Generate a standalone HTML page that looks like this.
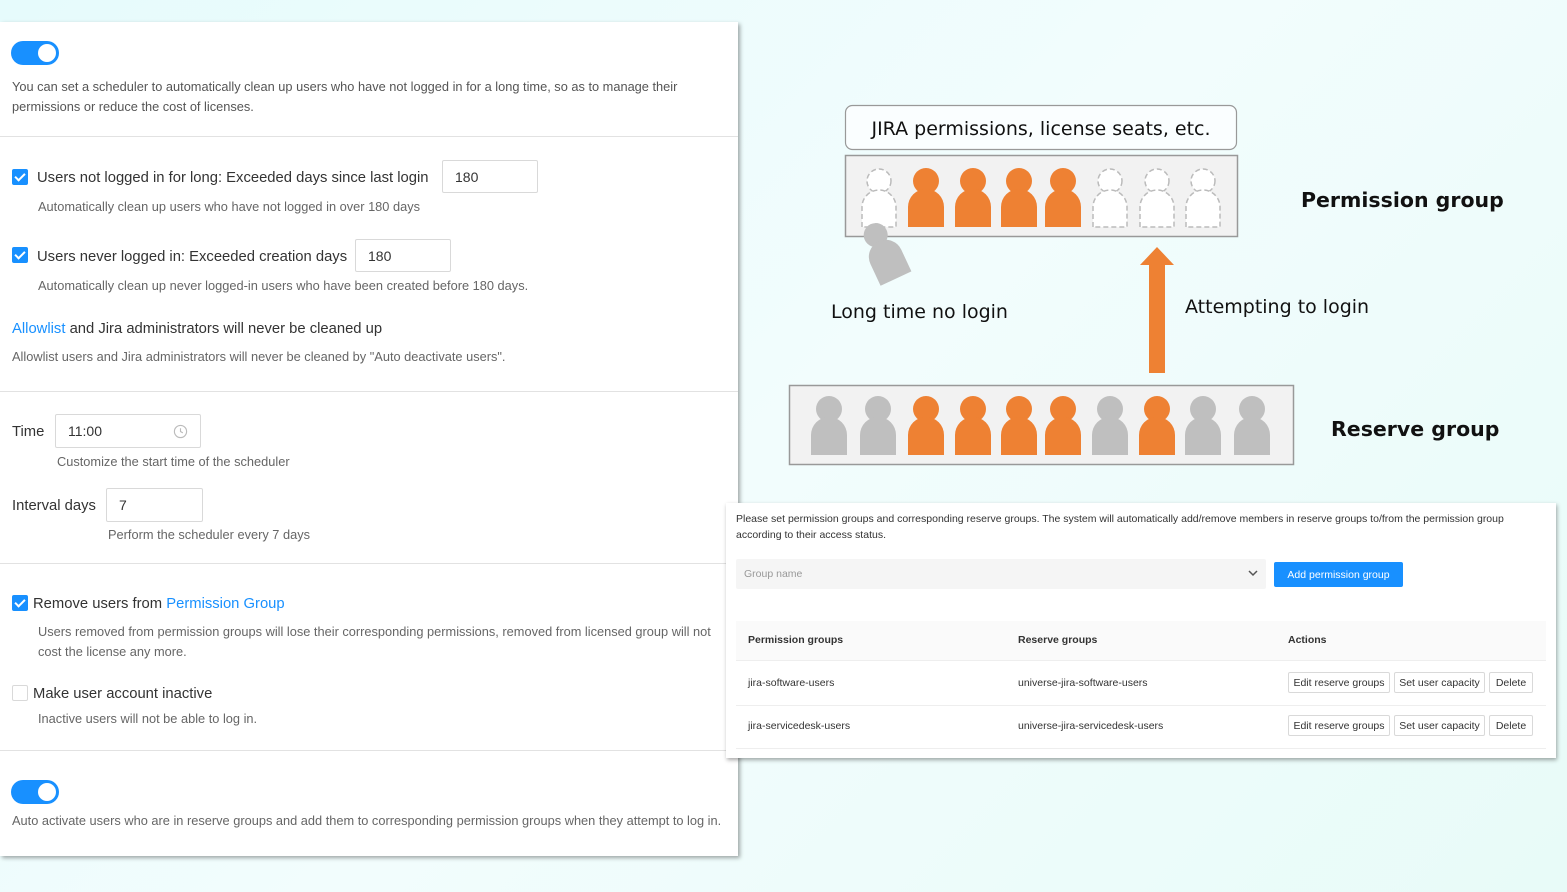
<!DOCTYPE html>
<html><head><meta charset="utf-8"><style>
*{margin:0;padding:0;box-sizing:border-box}
body{width:1567px;height:892px;overflow:hidden;background:linear-gradient(135deg,#e6fbfc 0%,#f2fdfd 50%,#e8fbf8 100%);font-family:"Liberation Sans",sans-serif;position:relative;color:#333}
.a{position:absolute;white-space:nowrap}
.panel{position:absolute;left:0;top:22px;width:738px;height:834px;background:#fff;box-shadow:2px 2px 4px rgba(0,0,0,.35)}
.hr{position:absolute;left:0;width:738px;height:1px;background:#e2e2e2}
.tog{position:absolute;width:48px;height:24px;border-radius:12px;background:#1890ff}
.tog:after{content:"";position:absolute;right:3px;top:3px;width:18px;height:18px;border-radius:50%;background:#fff}
.cb{position:absolute;width:16px;height:16px;border-radius:2px;background:#1890ff}
.cb:after{content:"";position:absolute;left:5px;top:2px;width:4px;height:8px;border:solid #fff;border-width:0 2px 2px 0;transform:rotate(45deg)}
.cbe{position:absolute;width:16px;height:16px;border-radius:2px;border:1px solid #d9d9d9;background:#fff}
.lbl{font-size:14.8px;color:#333}
.desc{font-size:12.8px;color:#666}
.inp{position:absolute;border:1px solid #d9d9d9;border-radius:2px;background:#fff;font-size:14px;color:#333;padding-left:12px;display:flex;align-items:center}
.blue{color:#1890ff}
.rp{position:absolute;left:726px;top:503px;width:830px;height:255px;background:#fff;box-shadow:1px 2px 4px rgba(0,0,0,.35)}
.sm{font-size:10.5px;color:#333}
.btn{position:absolute;border:1px solid #d9d9d9;border-radius:2px;font-size:10.5px;color:#333;display:flex;align-items:center;justify-content:center;background:#fff}
</style></head><body>
<div class="panel">
 <div class="tog" style="left:11px;top:19px"></div>
 <div class="a desc" style="left:12px;top:57px;color:#555">You can set a scheduler to automatically clean up users who have not logged in for a long time, so as to manage their</div>
 <div class="a desc" style="left:12px;top:77px;color:#555">permissions or reduce the cost of licenses.</div>
 <div class="hr" style="top:114px"></div>

 <div class="cb" style="left:12px;top:147px"></div>
 <div class="a lbl" style="left:37px;top:148px">Users not logged in for long: Exceeded days since last login</div>
 <div class="inp" style="left:442px;top:138px;width:96px;height:33px">180</div>
 <div class="a desc" style="left:38px;top:177px">Automatically clean up users who have not logged in over 180 days</div>

 <div class="cb" style="left:12px;top:225px"></div>
 <div class="a lbl" style="left:37px;top:227px">Users never logged in: Exceeded creation days</div>
 <div class="inp" style="left:355px;top:217px;width:96px;height:33px">180</div>
 <div class="a desc" style="left:38px;top:256px">Automatically clean up never logged-in users who have been created before 180 days.</div>

 <div class="a lbl" style="left:12px;top:299px"><span class="blue">Allowlist</span> and Jira administrators will never be cleaned up</div>
 <div class="a desc" style="left:12px;top:327px">Allowlist users and Jira administrators will never be cleaned by "Auto deactivate users".</div>
 <div class="hr" style="top:369px"></div>

 <div class="a lbl" style="left:12px;top:402px">Time</div>
 <div class="inp" style="left:55px;top:392px;width:146px;height:34px">11:00
  <svg style="position:absolute;right:12px;top:9px" width="15" height="15" viewBox="0 0 16 16"><circle cx="8" cy="8" r="6.5" fill="none" stroke="#bbb" stroke-width="1.2"/><path d="M8 4.5V8l2.5 1.5" fill="none" stroke="#bbb" stroke-width="1.2"/></svg></div>
 <div class="a desc" style="left:57px;top:432px">Customize the start time of the scheduler</div>

 <div class="a lbl" style="left:12px;top:476px">Interval days</div>
 <div class="inp" style="left:106px;top:466px;width:97px;height:34px">7</div>
 <div class="a desc" style="left:108px;top:505px">Perform the scheduler every 7 days</div>
 <div class="hr" style="top:541px"></div>

 <div class="cb" style="left:12px;top:573px"></div>
 <div class="a lbl" style="left:33px;top:574px">Remove users from <span class="blue">Permission Group</span></div>
 <div class="a desc" style="left:38px;top:602px">Users removed from permission groups will lose their corresponding permissions, removed from licensed group will not</div>
 <div class="a desc" style="left:38px;top:622px">cost the license any more.</div>

 <div class="cbe" style="left:12px;top:663px"></div>
 <div class="a lbl" style="left:33px;top:664px">Make user account inactive</div>
 <div class="a desc" style="left:38px;top:689px">Inactive users will not be able to log in.</div>
 <div class="hr" style="top:728px"></div>

 <div class="tog" style="left:11px;top:758px"></div>
 <div class="a desc" style="left:12px;top:791px">Auto activate users who are in reserve groups and add them to corresponding permission groups when they attempt to log in.</div>
</div>

<svg class="a" style="left:0;top:0" width="1567" height="892">
 <defs>
  <g id="p"><circle cx="0" cy="-14" r="13"/><path d="M-18 32V12a18 18 0 0 1 36 0V32Z"/></g>
  <g id="d" fill="#fff" stroke="#bbb" stroke-width="1.5" stroke-dasharray="5 3"><circle cx="0" cy="-14" r="12"/><path d="M-17 32V12a17 17 0 0 1 34 0V32Z"/></g>
 </defs>
 <rect x="845.5" y="105.5" width="391" height="44" rx="7" fill="#fafeff" stroke="#999" stroke-width="1.2"/>
 <text x="1041" y="135" text-anchor="middle" font-family="DejaVu Sans,Liberation Sans,sans-serif" font-size="19" fill="#111">JIRA permissions, license seats, etc.</text>
 <rect x="845.5" y="155.5" width="392" height="81" fill="#f2f2f2" stroke="#999" stroke-width="1.5"/>
 <g transform="translate(0,195)">
  <use href="#d" x="879"/>
  <g fill="#ee8133"><use href="#p" x="926"/><use href="#p" x="973"/><use href="#p" x="1019"/><use href="#p" x="1063"/></g>
  <use href="#d" x="1110"/><use href="#d" x="1157"/><use href="#d" x="1203"/>
 </g>
 <g fill="#bfbfbf" transform="translate(885,255) rotate(-25)"><circle cx="0" cy="-22" r="12"/><path d="M-17 26V2a17 17 0 0 1 34 0V26Z"/></g>
 <rect x="789.5" y="385.5" width="504" height="79" fill="#f2f2f2" stroke="#999" stroke-width="1.5"/>
 <g transform="translate(0,423)">
  <g fill="#bfbfbf"><use href="#p" x="829"/><use href="#p" x="878"/><use href="#p" x="1110"/><use href="#p" x="1203"/><use href="#p" x="1252"/></g>
  <g fill="#ee8133"><use href="#p" x="926"/><use href="#p" x="973"/><use href="#p" x="1019"/><use href="#p" x="1063"/><use href="#p" x="1157"/></g>
 </g>
 <path d="M1149 373V265h-9l17-18 17 18h-9v108Z" fill="#ee8133"/>
 <g font-family="DejaVu Sans,Liberation Sans,sans-serif" fill="#111">
  <text x="831" y="318" font-size="19">Long time no login</text>
  <text x="1185" y="313" font-size="19">Attempting to login</text>
  <text x="1301" y="207" font-size="20.5" font-weight="bold">Permission group</text>
  <text x="1331" y="436" font-size="20.5" font-weight="bold">Reserve group</text>
 </g>
</svg>

<div class="rp">
 <div class="a sm" style="left:10px;top:10px">Please set permission groups and corresponding reserve groups. The system will automatically add/remove members in reserve groups to/from the permission group</div>
 <div class="a sm" style="left:10px;top:26px">according to their access status.</div>
 <div class="a" style="left:10px;top:56px;width:530px;height:30px;background:#f5f5f5;border-radius:2px"></div>
 <div class="a sm" style="left:18px;top:65px;color:#999">Group name</div>
 <svg class="a" style="left:522px;top:66px" width="10" height="8" viewBox="0 0 10 8"><path d="M1 2l4 4 4-4" fill="none" stroke="#555" stroke-width="1.5"/></svg>
 <div class="a" style="left:548px;top:59px;width:129px;height:25px;background:#1890ff;border-radius:2px;color:#fff;font-size:10.5px;display:flex;align-items:center;justify-content:center">Add permission group</div>
 <div class="a" style="left:10px;top:118px;width:810px;height:40px;background:#fafafa;border-bottom:1px solid #eee"></div>
 <div class="a sm" style="left:22px;top:131px;font-weight:bold;color:#333">Permission groups</div>
 <div class="a sm" style="left:292px;top:131px;font-weight:bold">Reserve groups</div>
 <div class="a sm" style="left:562px;top:131px;font-weight:bold">Actions</div>
 <div class="a sm" style="left:22px;top:174px">jira-software-users</div>
 <div class="a sm" style="left:292px;top:174px">universe-jira-software-users</div>
 <div class="btn" style="left:562px;top:169px;width:102px;height:21px">Edit reserve groups</div>
 <div class="btn" style="left:668px;top:169px;width:91px;height:21px">Set user capacity</div>
 <div class="btn" style="left:763px;top:169px;width:44px;height:21px">Delete</div>
 <div class="a" style="left:10px;top:202px;width:810px;height:1px;background:#eee"></div>
 <div class="a sm" style="left:22px;top:217px">jira-servicedesk-users</div>
 <div class="a sm" style="left:292px;top:217px">universe-jira-servicedesk-users</div>
 <div class="btn" style="left:562px;top:212px;width:102px;height:21px">Edit reserve groups</div>
 <div class="btn" style="left:668px;top:212px;width:91px;height:21px">Set user capacity</div>
 <div class="btn" style="left:763px;top:212px;width:44px;height:21px">Delete</div>
 <div class="a" style="left:10px;top:245px;width:810px;height:1px;background:#eee"></div>
</div>
</body></html>
